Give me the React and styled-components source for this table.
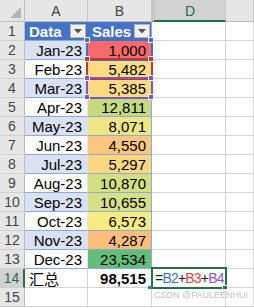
import React from "react";
import styled, { createGlobalStyle, css } from "styled-components";

const GlobalStyle = createGlobalStyle`
  html, body { margin: 0; padding: 0; background: #ffffff; overflow: hidden; }
  * { box-sizing: border-box; }
`;

const FONT = `"Liberation Sans", "Noto Sans CJK SC", Arial, sans-serif`;

const Sheet = styled.div`
  position: relative;
  display: grid;
  grid-template-columns: 25px 63px 64px 74px 1fr;
  grid-template-rows: 22px repeat(15, 19px);
  width: 254px;
  height: 308px;
  font-family: ${FONT};
  background: #fff;
`;

const Corner = styled.div`
  background: #e6e6e6;
  border-right: 1px solid #bdbdbd;
  border-bottom: 1px solid #bdbdbd;
  display: flex;
  align-items: flex-end;
  justify-content: flex-end;
  padding: 0 3px 3px 0;
`;

const ColHeader = styled.div`
  background: ${(p) => (p.$active ? "#d2d2d2" : "#e6e6e6")};
  color: ${(p) => (p.$active ? "#1e6b45" : "#444")};
  border-right: 1px solid #c6c6c6;
  border-bottom: ${(p) => (p.$active ? "2px solid #217346" : "1px solid #bdbdbd")};
  ${(p) => p.$hiddenBefore && css`border-left: 3px double #bdbdbd;`}
  font-size: 14px;
  display: flex;
  align-items: center;
  justify-content: center;
  padding-top: 1px;
`;

const RowHeader = styled.div`
  background: ${(p) => (p.$active ? "#d2d2d2" : "#e6e6e6")};
  color: ${(p) => (p.$active ? "#1e6b45" : "#444")};
  border-right: ${(p) => (p.$active ? "2px solid #217346" : "1px solid #bdbdbd")};
  border-bottom: 1px solid #d0d0d0;
  font-size: 14px;
  display: flex;
  align-items: center;
  justify-content: center;
`;

const Cell = styled.div`
  position: relative;
  background: ${(p) => p.$bg || "#ffffff"};
  border-right: 1px solid ${(p) => p.$rightColor || "#d4d4d4"};
  border-bottom: 1px solid ${(p) => p.$bottomColor || "#d4d4d4"};
  color: ${(p) => p.$color || "#000"};
  font-size: 15px;
  font-weight: ${(p) => (p.$bold ? 700 : 400)};
  display: flex;
  align-items: center;
  justify-content: ${(p) => (p.$align === "right" ? "flex-end" : "flex-start")};
  padding: 0 ${(p) => (p.$align === "right" ? "5px" : "3px")} 0 4px;
  white-space: nowrap;
  overflow: visible;
`;

const FilterButton = styled.div`
  position: absolute;
  right: 1px;
  top: 2px;
  width: 16px;
  height: 14px;
  background: #f2f2f2;
  border: 1px solid #b4b4b4;
  display: flex;
  align-items: center;
  justify-content: center;
`;

const Formula = styled.span`
  font-size: 14px;
  letter-spacing: -0.8px;
  color: #222;
  margin-left: -1px;
`;

const Ref = styled.span`
  color: ${(p) => p.$color};
`;

const RefBox = styled.div`
  position: absolute;
  left: 86px;
  top: ${(p) => p.$top}px;
  width: 67px;
  height: 22px;
  border: 2px solid ${(p) => p.$color};
  pointer-events: none;
`;

const Handle = styled.div`
  position: absolute;
  width: 6px;
  height: 6px;
  background: ${(p) => p.$color};
  border: 1px solid #fff;
  left: ${(p) => p.$x}px;
  top: ${(p) => p.$y}px;
`;

const ActiveBox = styled.div`
  position: absolute;
  left: 151px;
  top: 267px;
  width: 76px;
  height: 22px;
  border: 2px solid #217346;
  pointer-events: none;
`;

const FillHandle = styled.div`
  position: absolute;
  left: 222px;
  top: 285px;
  width: 6px;
  height: 5px;
  background: #217346;
  border: 1px solid #fff;
`;

const SumMark = styled.div`
  position: absolute;
  left: 148px;
  top: 286px;
  width: 4px;
  height: 3px;
  background: #4472c4;
`;

const Watermark = styled.div`
  position: absolute;
  left: 154px;
  top: 290px;
  font-family: ${FONT};
  font-size: 9px;
  color: rgba(170, 170, 170, 0.75);
  white-space: nowrap;
`;

const data = [
  ["Jan-23", 1000],
  ["Feb-23", 5482],
  ["Mar-23", 5385],
  ["Apr-23", 12811],
  ["May-23", 8071],
  ["Jun-23", 4550],
  ["Jul-23", 5297],
  ["Aug-23", 10870],
  ["Sep-23", 10655],
  ["Oct-23", 6573],
  ["Nov-23", 4287],
  ["Dec-23", 23534],
];

const vals = data.map((d) => d[1]);
const min = Math.min(...vals);
const max = Math.max(...vals);
const sorted = [...vals].sort((a, b) => a - b);
const mid = (sorted[5] + sorted[6]) / 2;
const lerp = (a, b, t) => Math.round(a + (b - a) * t);
const RED = [248, 105, 107];
const YEL = [255, 235, 132];
const GRN = [99, 190, 123];
function scale(v) {
  let c;
  if (v <= mid) {
    const t = (v - min) / (mid - min);
    c = RED.map((x, i) => lerp(x, YEL[i], t));
  } else {
    const t = (v - mid) / (max - mid);
    c = YEL.map((x, i) => lerp(x, GRN[i], t));
  }
  return `rgb(${c.join(",")})`;
}
const fmt = (n) => n.toLocaleString("en-US");

const TABLE_LINE = "#8ea9db";

function Triangle() {
  return (
    <svg width="11" height="11" viewBox="0 0 11 11">
      <polygon points="11,0 11,11 0,11" fill="#b4b4b4" />
    </svg>
  );
}

function Dropdown() {
  return (
    <FilterButton>
      <svg width="8" height="5" viewBox="0 0 8 5">
        <polygon points="0,0 8,0 4,4.5" fill="#555" />
      </svg>
    </FilterButton>
  );
}

export default function App() {
  const total = vals.reduce((a, b) => a + b, 0);
  return (
    <>
      <GlobalStyle />
      <Sheet>
        <Corner>
          <Triangle />
        </Corner>
        <ColHeader>A</ColHeader>
        <ColHeader>B</ColHeader>
        <ColHeader $active $hiddenBefore>D</ColHeader>
        <ColHeader />

        <RowHeader>1</RowHeader>
        <Cell $bg="#4472c4" $color="#fff" $bold $rightColor="#4472c4" $bottomColor={TABLE_LINE}>
          Data
          <Dropdown />
        </Cell>
        <Cell $bg="#4472c4" $color="#fff" $bold $rightColor={TABLE_LINE} $bottomColor={TABLE_LINE}>
          Sales
          <Dropdown />
        </Cell>
        <Cell />
        <Cell />

        {data.map(([m, v], i) => {
          const r = i + 2;
          const band = r % 2 === 0;
          return (
            <React.Fragment key={m}>
              <RowHeader>{r}</RowHeader>
              <Cell
                $align="right"
                $bg={band ? "#d9e1f2" : "#ffffff"}
                $rightColor={band ? "#d9e1f2" : "#e4e4e4"}
                $bottomColor={TABLE_LINE}
              >
                {m}
              </Cell>
              <Cell
                $align="right"
                $bg={scale(v)}
                $rightColor={TABLE_LINE}
                $bottomColor={TABLE_LINE}
              >
                {fmt(v)}
              </Cell>
              <Cell />
              <Cell />
            </React.Fragment>
          );
        })}

        <RowHeader $active>14</RowHeader>
        <Cell>汇总</Cell>
        <Cell $align="right" $bold>
          {fmt(total)}
        </Cell>
        <Cell>
          <Formula>
            {"="}
            <Ref $color="#4472c4">B2</Ref>
            {"+"}
            <Ref $color="#e0463c">B3</Ref>
            {"+"}
            <Ref $color="#8e59d0">B4</Ref>
          </Formula>
        </Cell>
        <Cell />

        <RowHeader>15</RowHeader>
        <Cell />
        <Cell />
        <Cell />
        <Cell />

        <RefBox $top={39} $color="#3f6fc8" />
        <Handle $color="#3f6fc8" $x={84} $y={37} />
        <Handle $color="#3f6fc8" $x={148} $y={37} />
        <RefBox $top={58} $color="#c8323c" />
        <Handle $color="#c8323c" $x={84} $y={56} />
        <Handle $color="#c8323c" $x={148} $y={56} />
        <RefBox $top={77} $color="#8054c4" />
        <Handle $color="#8054c4" $x={84} $y={75} />
        <Handle $color="#8054c4" $x={148} $y={75} />
        <Handle $color="#8054c4" $x={84} $y={94} />
        <Handle $color="#8054c4" $x={148} $y={94} />

        <ActiveBox />
        <FillHandle />
        <SumMark />
        <Watermark>CSDN @PAULEENHUI</Watermark>
      </Sheet>
    </>
  );
}
